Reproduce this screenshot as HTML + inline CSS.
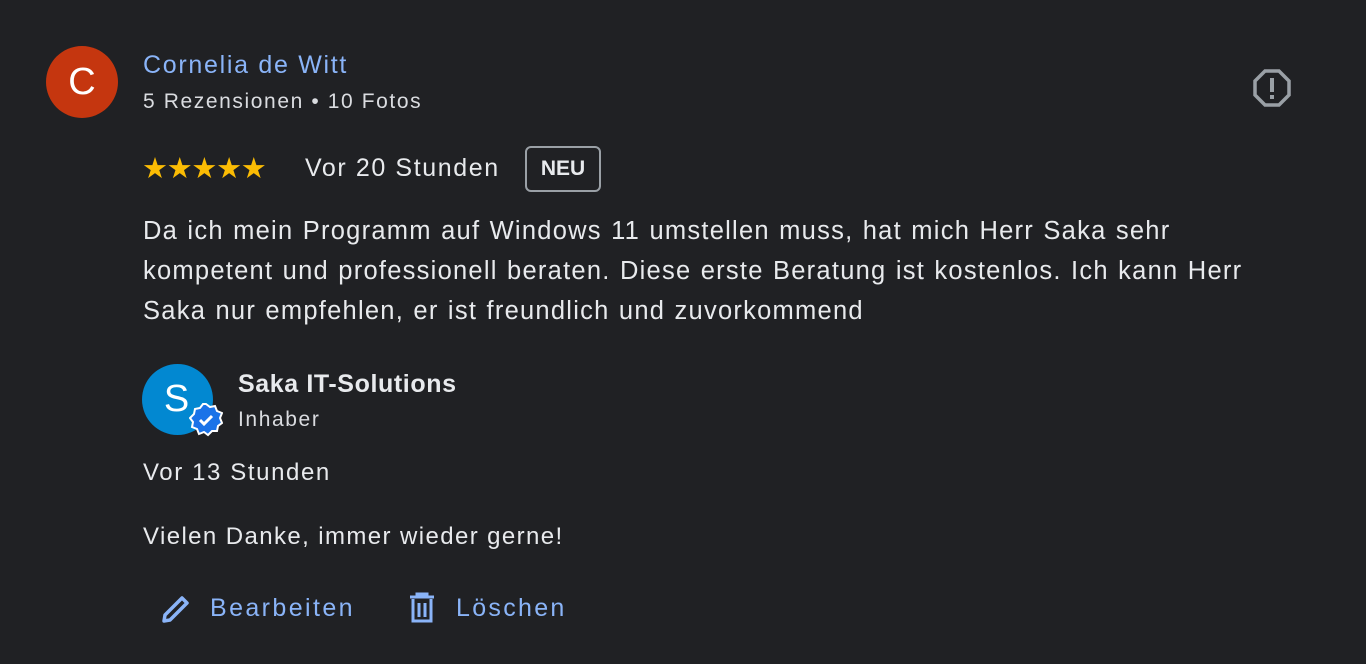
<!DOCTYPE html>
<html><head><meta charset="utf-8"><style>
body{margin:0;width:1366px;height:664px;background:#202124;font-family:"Liberation Sans",sans-serif;color:#e8eaed;position:relative;overflow:hidden}
.a{position:absolute;white-space:nowrap;letter-spacing:1.6px}
</style></head><body>
<div class="a" style="left:46px;top:46px;width:72px;height:72px;border-radius:50%;background:#c5360f;color:#fff;font-size:38px;line-height:72px;text-align:center;letter-spacing:0">C</div>
<div class="a" style="left:143px;top:51px;font-size:25px;color:#8ab4f8;letter-spacing:1.7px">Cornelia de Witt</div>
<div class="a" style="left:143px;top:90px;font-size:21px;color:#dadce0">5 Rezensionen • 10 Fotos</div>
<svg class="a" style="left:1252px;top:68px" width="40" height="40" viewBox="0 0 40 40"><polygon points="13,3 27,3 37,13 37,27 27,37 13,37 3,27 3,13" fill="none" stroke="#9aa0a6" stroke-width="3.5"/><rect x="18" y="10" width="4" height="14" fill="#9aa0a6"/><rect x="18" y="27" width="4" height="4" fill="#9aa0a6"/></svg>
<div class="a" style="left:142px;top:151px;font-size:29px;color:#fbbc04;letter-spacing:-1.3px">★★★★★</div>
<div class="a" style="left:305px;top:154px;font-size:25px">Vor 20 Stunden</div>
<div class="a" style="left:525px;top:146px;width:76px;height:46px;border:2px solid #9aa0a6;border-radius:6px;box-sizing:border-box;font-size:21px;font-weight:bold;line-height:42px;text-align:center;letter-spacing:0">NEU</div>
<div class="a" style="left:143px;top:211px;font-size:25.5px;line-height:40px;white-space:normal;width:1125px;letter-spacing:1.25px;word-spacing:1px">Da ich mein Programm auf Windows 11 umstellen muss, hat mich Herr Saka sehr kompetent und professionell beraten. Diese erste Beratung ist kostenlos. Ich kann Herr Saka nur empfehlen, er ist freundlich und zuvorkommend</div>
<div class="a" style="left:142px;top:364px;width:71px;height:71px;border-radius:50%;background:#0288d1;color:#fff;font-size:38px;line-height:71px;text-align:center;text-indent:-2px;letter-spacing:0">S</div>
<svg class="a" style="left:189px;top:403px" width="34" height="34" viewBox="0 0 34 34"><polygon points="17,1 21,4 26,3 28,8 33,10 31,15 33,20 29,23 28,28 23,28 19,32 15,29 10,31 8,26 3,24 4,19 1,15 5,11 6,6 11,5 14,1" fill="#1a73e8" stroke="#fff" stroke-width="2"/><path d="M11 17l4 4 8-8" fill="none" stroke="#fff" stroke-width="3"/></svg>
<div class="a" style="left:238px;top:370px;font-size:25px;font-weight:bold;letter-spacing:0.6px">Saka IT-Solutions</div>
<div class="a" style="left:238px;top:408px;font-size:21px;color:#dadce0">Inhaber</div>
<div class="a" style="left:143px;top:459px;font-size:24px">Vor 13 Stunden</div>
<div class="a" style="left:143px;top:523px;font-size:24px;letter-spacing:1.4px">Vielen Danke, immer wieder gerne!</div>
<svg class="a" style="left:160px;top:593px" width="32" height="32" viewBox="0 0 32 32"><path d="M4 28l1-6L22 5l5 5L10 27z" fill="none" stroke="#8ab4f8" stroke-width="3.5" stroke-linejoin="round"/></svg>
<div class="a" style="left:210px;top:594px;font-size:25px;color:#8ab4f8;letter-spacing:2.4px">Bearbeiten</div>
<svg class="a" style="left:408px;top:592px" width="28" height="32" viewBox="0 0 28 32"><path d="M2 5h24M9 5V2h10v3M5 7v22h18V7M11 11v14M17 11v14" fill="none" stroke="#8ab4f8" stroke-width="3"/></svg>
<div class="a" style="left:456px;top:594px;font-size:25px;color:#8ab4f8;letter-spacing:2.3px">Löschen</div>
</body></html>
